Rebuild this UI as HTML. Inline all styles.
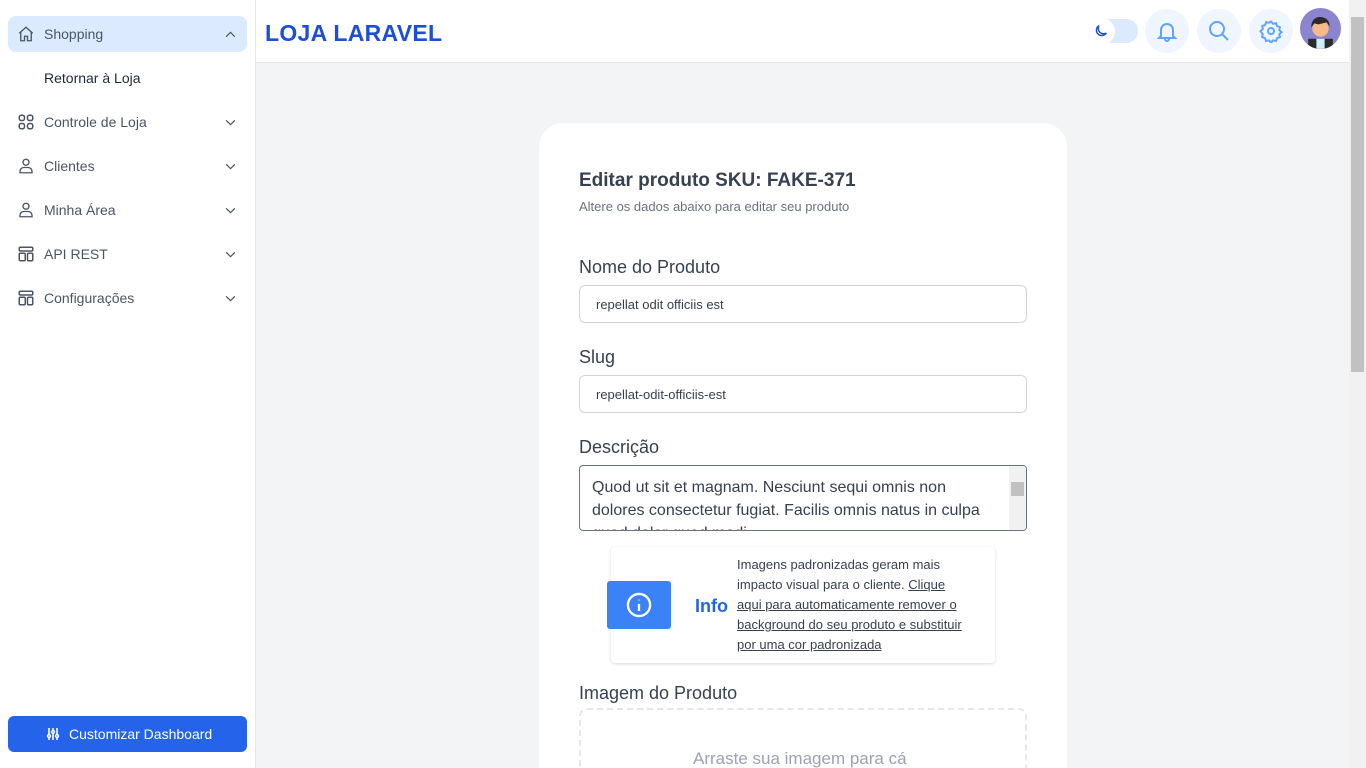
<!DOCTYPE html>
<html><head><meta charset="utf-8"><style>
*{box-sizing:border-box;margin:0;padding:0}
html,body{width:1366px;height:768px;overflow:hidden}
body{position:relative;font-family:"Liberation Sans",sans-serif;background:#f3f4f6;color:#374151}
.abs{position:absolute}
.side{left:0;top:0;width:256px;height:768px;background:#fff;border-right:1px solid #e5e7eb}
.item{position:absolute;left:8px;width:239px;height:36px;border-radius:8px;font-size:14px;color:#4b5563}
.item .t{position:absolute;left:36px;top:10px}
.item svg.i{position:absolute;left:9px;top:9px}
.item svg.c{position:absolute;left:216px;top:12px}
.hdr{left:256px;top:0;width:1093px;height:63px;background:#fff;border-bottom:1px solid #e5e7eb}
.circ{position:absolute;top:9px;width:44px;height:44px;border-radius:50%;background:#eff6ff}
.card{left:539px;top:123px;width:528px;height:645px;background:#fff;border-radius:24px 24px 0 0;overflow:hidden}
.lbl{position:absolute;left:40px;font-size:18px;color:#374151}
.inp{position:absolute;left:40px;width:448px;height:38px;border:1px solid #d1d5db;border-radius:6px;font-size:13px;padding:11px 16px;color:#374151}
</style></head><body>
<div class="abs side">
 <div class="item" style="top:16px;background:#dbeafe">
  <svg class="i" width="18" height="18" viewBox="0 0 24 24" fill="none" stroke="#4b5563" stroke-width="1.8"><path d="M3 11l9-8 9 8M5 9v12h5v-6h4v6h5V9"/></svg>
  <span class="t">Shopping</span>
  <svg class="c" width="13" height="13" viewBox="0 0 24 24" fill="none" stroke="#4b5563" stroke-width="2.2"><path d="M4 16l8-8 8 8"/></svg></div>
 <div class="abs" style="left:44px;top:70px;font-size:14px;color:#1f2937">Retornar à Loja</div>
 <div class="item" style="top:104px"><svg class="i" width="18" height="18" viewBox="0 0 24 24" fill="none" stroke="#4b5563" stroke-width="2"><rect x="3" y="3" width="7" height="7" rx="2.5"/><rect x="14" y="3" width="7" height="7" rx="2.5"/><rect x="3" y="14" width="7" height="7" rx="2.5"/><rect x="14" y="14" width="7" height="7" rx="2.5"/></svg><span class="t">Controle de Loja</span><svg class="c" width="13" height="13" viewBox="0 0 24 24" fill="none" stroke="#4b5563" stroke-width="2.2"><path d="M4 8l8 8 8-8"/></svg></div>
 <div class="item" style="top:148px"><svg class="i" width="18" height="18" viewBox="0 0 24 24" fill="none" stroke="#4b5563" stroke-width="1.8"><circle cx="12" cy="7" r="4"/><path d="M4 21v-2a5 5 0 015-5h6a5 5 0 015 5v2z"/></svg><span class="t">Clientes</span><svg class="c" width="13" height="13" viewBox="0 0 24 24" fill="none" stroke="#4b5563" stroke-width="2.2"><path d="M4 8l8 8 8-8"/></svg></div>
 <div class="item" style="top:192px"><svg class="i" width="18" height="18" viewBox="0 0 24 24" fill="none" stroke="#4b5563" stroke-width="1.8"><circle cx="12" cy="7" r="4"/><path d="M4 21v-2a5 5 0 015-5h6a5 5 0 015 5v2z"/></svg><span class="t">Minha Área</span><svg class="c" width="13" height="13" viewBox="0 0 24 24" fill="none" stroke="#4b5563" stroke-width="2.2"><path d="M4 8l8 8 8-8"/></svg></div>
 <div class="item" style="top:236px"><svg class="i" width="18" height="18" viewBox="0 0 24 24" fill="none" stroke="#4b5563" stroke-width="2"><rect x="3" y="3" width="18" height="5" rx="1.5"/><rect x="3" y="11" width="8" height="10" rx="1.5"/><rect x="14" y="11" width="7" height="10" rx="1.5"/></svg><span class="t">API REST</span><svg class="c" width="13" height="13" viewBox="0 0 24 24" fill="none" stroke="#4b5563" stroke-width="2.2"><path d="M4 8l8 8 8-8"/></svg></div>
 <div class="item" style="top:280px"><svg class="i" width="18" height="18" viewBox="0 0 24 24" fill="none" stroke="#4b5563" stroke-width="2"><rect x="3" y="3" width="18" height="5" rx="1.5"/><rect x="3" y="11" width="8" height="10" rx="1.5"/><rect x="14" y="11" width="7" height="10" rx="1.5"/></svg><span class="t">Configurações</span><svg class="c" width="13" height="13" viewBox="0 0 24 24" fill="none" stroke="#4b5563" stroke-width="2.2"><path d="M4 8l8 8 8-8"/></svg></div>
 <div class="abs" style="left:8px;top:716px;width:239px;height:36px;background:#2563eb;border-radius:6px;color:#fff;font-size:14px">
  <svg class="abs" style="left:38px;top:11px" width="14" height="14" viewBox="0 0 14 14" fill="none" stroke="#fff" stroke-width="1.6"><path d="M3 1v12M7 1v12M11 1v12"/><circle cx="3" cy="9" r="1.4" fill="#2563eb"/><circle cx="7" cy="5" r="1.4" fill="#2563eb"/><circle cx="11" cy="9" r="1.4" fill="#2563eb"/></svg>
  <span class="abs" style="left:61px;top:10px">Customizar Dashboard</span></div>
</div>
<div class="abs hdr">
 <div class="abs" style="left:9px;top:20px;font-size:23px;font-weight:bold;color:#1d4ed8;letter-spacing:0.3px">LOJA LARAVEL</div>
 <div class="abs" style="left:836px;top:19px;width:46px;height:24px;border-radius:12px;background:#dbeafe"></div>
 <div class="abs" style="left:832px;top:18px;width:27px;height:27px;border-radius:50%;background:#fff"></div>
 <svg class="abs" style="left:837px;top:23px" width="16" height="16" viewBox="0 0 24 24" fill="none" stroke="#1d4ed8" stroke-width="2.2"><path d="M20 15A8 8 0 019 4a8 8 0 1011 11z"/></svg>
 <div class="circ" style="left:889px"><svg style="margin:10px" width="24" height="24" viewBox="0 0 24 24" fill="none" stroke="#60a5fa" stroke-width="2"><path d="M6 17V11a6 6 0 0112 0v6l2 2H4zM10 20a2 2 0 004 0"/></svg></div>
 <div class="circ" style="left:941px"><svg style="margin:10px" width="24" height="24" viewBox="0 0 24 24" fill="none" stroke="#60a5fa" stroke-width="2"><circle cx="10" cy="10" r="7"/><path d="M15 15l6 6"/></svg></div>
 <div class="circ" style="left:993px"><svg style="margin:10px" width="24" height="24" viewBox="0 0 24 24" fill="none" stroke="#60a5fa" stroke-width="2"><circle cx="12" cy="12" r="3"/><path d="M12 2.5l2 2.3 3-.6 1 2.9 2.9 1-.6 3 2.3 2-2.3 2 .6 3-2.9 1-1 2.9-3-.6-2 2.3-2-2.3-3 .6-1-2.9-2.9-1 .6-3L1.5 12l2.3-2-.6-3 2.9-1 1-2.9 3 .6z"/></svg></div>
 <svg class="abs" style="left:1044px;top:8px" width="41" height="41" viewBox="0 0 40 40"><circle cx="20" cy="20" r="20" fill="#8b84cf"/><clipPath id="cp"><circle cx="20" cy="20" r="20"/></clipPath><g clip-path="url(#cp)"><rect x="8" y="30" width="24" height="12" fill="#2d2a2a"/><rect x="16" y="30" width="8" height="12" fill="#cfeef5"/><circle cx="20" cy="20" r="8" fill="#f7b98a"/><path d="M11 19c0-9 6-11 11-10 5 1 7 5 7 9l-3-4-8 2-4-1z" fill="#2d2a2a"/></g></svg>
</div>
<div class="abs" style="left:1349px;top:0;width:17px;height:768px;background:#f1f1f1"></div>
<div class="abs" style="left:1351px;top:17px;width:13px;height:355px;background:#c1c1c1"></div>
<div class="abs card">
 <div class="abs" style="left:40px;top:47px;font-size:19px;font-weight:bold;color:#374151">Editar produto SKU: FAKE-371</div>
 <div class="abs" style="left:40px;top:76px;font-size:13px;color:#6b7280">Altere os dados abaixo para editar seu produto</div>
 <div class="lbl" style="top:134px">Nome do Produto</div>
 <div class="inp" style="top:162px">repellat odit officiis est</div>
 <div class="lbl" style="top:224px">Slug</div>
 <div class="inp" style="top:252px">repellat-odit-officiis-est</div>
 <div class="lbl" style="top:314px">Descrição</div>
 <div class="abs" style="left:40px;top:342px;width:448px;height:66px;border:1px solid #6b7280;border-radius:4px;overflow:hidden;font-size:16px;line-height:23px;padding:10px 30px 0 12px;color:#374151">Quod ut sit et magnam. Nesciunt sequi omnis non dolores consectetur fugiat. Facilis omnis natus in culpa quod dolor quod modi.
  <div class="abs" style="right:0;top:0;width:17px;height:64px;background:#f1f1f1"><div style="margin:16px 2px;height:14px;background:#c1c1c1"></div></div></div>
 <div class="abs" style="left:72px;top:424px;width:384px;height:116px;background:#fff;border-radius:4px;box-shadow:0 1px 3px rgba(0,0,0,.15)"></div>
 <div class="abs" style="left:68px;top:458px;width:64px;height:48px;background:#3b82f6;border-radius:3px"><svg style="margin:10px 18px" width="28" height="28" viewBox="0 0 24 24" fill="none" stroke="#fff" stroke-width="2"><circle cx="12" cy="12" r="9.5"/><path d="M12 11v6M12 7.5v.5"/></svg></div>
 <div class="abs" style="left:156px;top:473px;font-size:18px;font-weight:bold;color:#2563eb">Info</div>
 <div class="abs" style="left:198px;top:432px;width:236px;font-size:13px;line-height:20px;color:#374151">Imagens padronizadas geram mais impacto visual para o cliente. <u>Clique aqui para automaticamente remover o background do seu produto e substituir por uma cor padronizada</u></div>
 <div class="lbl" style="top:560px">Imagem do Produto</div>
 <div class="abs" style="left:40px;top:585px;width:448px;height:60px;border:2px dashed #e5e7eb;border-bottom:none;border-radius:8px 8px 0 0"></div>
 <div class="abs" style="left:154px;top:626px;font-size:17px;line-height:19px;color:#9ca3af">Arraste sua imagem para cá</div>
</div>
</body></html>
